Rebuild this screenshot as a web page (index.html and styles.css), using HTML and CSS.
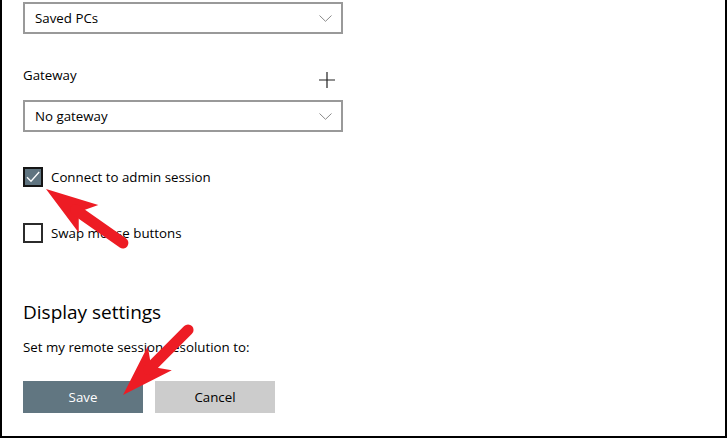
FILE: index.html
```html
<!DOCTYPE html>
<html lang="en">
<head>
    <meta charset="UTF-8">
    <title>Edit PC</title>
    <link rel="stylesheet" href="styles.css">
</head>
<body>
    <div class="frame">
        <!-- Grupo / gateway -->
        <div class="select">
            <span>Saved PCs</span>
            <svg class="chevron" width="13" height="7" viewBox="0 0 13 7"><path d="M0.5 0.5 L6.5 6.3 L12.5 0.5" fill="none" stroke="#8a8a8a" stroke-width="1"/></svg>
        </div>

        <div class="field-head">
            <span>Gateway</span>
            <svg class="plus" width="16" height="16" viewBox="0 0 16 16"><path d="M8 0 V16 M0 8 H16" stroke="#222" stroke-width="1.2"/></svg>
        </div>

        <div class="select select-gateway">
            <span>No gateway</span>
            <svg class="chevron" width="13" height="7" viewBox="0 0 13 7"><path d="M0.5 0.5 L6.5 6.3 L12.5 0.5" fill="none" stroke="#8a8a8a" stroke-width="1"/></svg>
        </div>

        <!-- Opções -->
        <div class="check check-admin">
            <span class="box checked">
                <svg width="16" height="16" viewBox="0 0 16 16"><path d="M2 8.2 L6 12.2 L14.2 3" fill="none" stroke="#fff" stroke-width="1.3"/></svg>
            </span>
            <span>Connect to admin session</span>
        </div>

        <div class="check check-mouse">
            <span class="box"></span>
            <span>Swap mouse buttons</span>
        </div>

        <h2>Display settings</h2>
        <p class="hint">Set my remote session resolution to:</p>

        <div class="actions">
            <button class="btn btn-save">Save</button>
            <button class="btn btn-cancel">Cancel</button>
        </div>

        <!-- Setas vermelhas por cima -->
        <svg class="arrows" width="728" height="438" viewBox="0 0 728 438">
            <g transform="translate(46 189) rotate(35.1)" fill="#ed1c24" stroke="#ed1c24">
                <polygon points="0,0 52,-17 40,0 52,17" stroke="none"/>
                <line x1="36" y1="0" x2="94" y2="0" stroke-width="11" stroke-linecap="round"/>
            </g>
            <g transform="translate(123 395) rotate(-45)" fill="#ed1c24" stroke="#ed1c24">
                <polygon points="0,0 52,-17 40,0 52,17" stroke="none"/>
                <line x1="36" y1="0" x2="92" y2="0" stroke-width="11" stroke-linecap="round"/>
            </g>
        </svg>
    </div>
</body>
</html>
```

FILE: styles.css
```css
/* Geral */
body { margin: 0; background: #fff; font-family: "Open Sans", "Noto Sans", sans-serif; color: #000; }
.frame { position: relative; box-sizing: border-box; width: 727px; height: 438px; padding: 2px 0 0 21px; border: 2px solid #000; border-top: none; background: #fff; }

/* Dropdowns */
.select { box-sizing: border-box; width: 320px; height: 32px; display: flex; align-items: center; justify-content: space-between; padding: 0 9px 0 10px; border: 2px solid #999; font-size: 13.3px; }
.select-gateway { margin-top: 14px; }
.chevron { margin-top: 1px; }
.select span { margin-top: -1px; }

.field-head { width: 312px; height: 22px; margin-top: 30px; display: flex; align-items: center; justify-content: space-between; font-size: 13.3px; }
.plus { margin-top: 9px; }

/* Checkboxes */
.check { display: flex; align-items: center; gap: 8px; height: 20px; font-size: 13.3px; }
.check-admin { margin-top: 35px; }
.check-mouse { margin-top: 36px; }
.box { box-sizing: border-box; width: 20px; height: 20px; border: 2px solid #2b2b2b; display: flex; align-items: center; justify-content: center; background: #fff; }
.box.checked { background: #5f7480; border-color: #151515; }

/* Display settings */
h2 { margin: 54px 0 0; font-size: 19px; font-weight: normal; line-height: 30px; color: #000; }
.hint { margin: 10px 0 0; font-size: 13.3px; line-height: 20px; }

/* Botões */
.actions { display: flex; gap: 12px; margin-top: 24px; }
.btn { width: 120px; height: 32px; border: none; font-family: inherit; font-size: 13.3px; padding: 0; }
.btn-save { background: #617681; color: #fff; }
.btn-cancel { background: #cccccc; color: #000; }

.arrows { position: absolute; left: -2px; top: 0; pointer-events: none; }
```
